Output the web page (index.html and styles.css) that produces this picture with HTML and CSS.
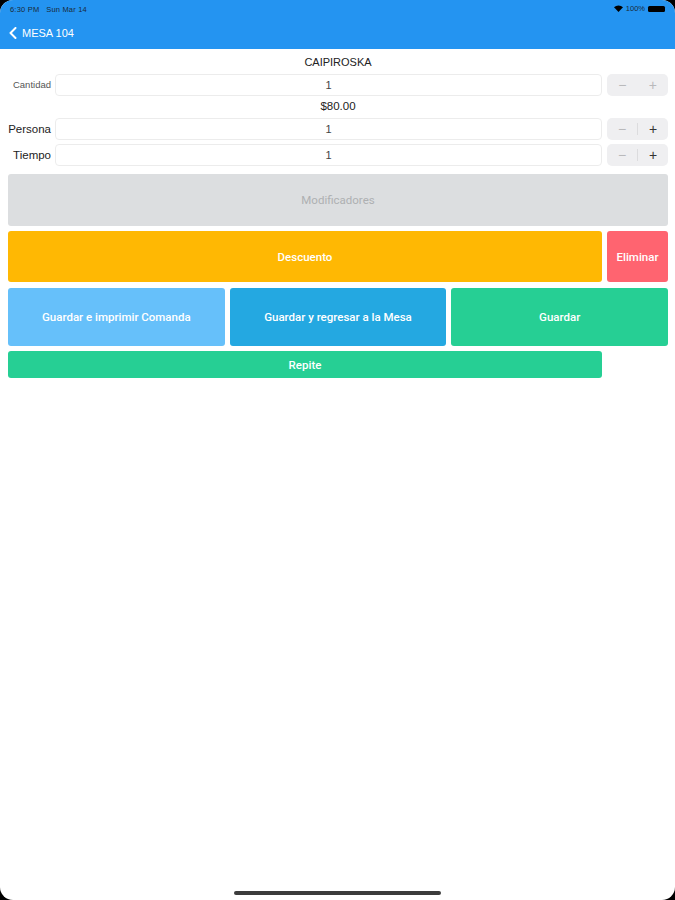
FILE: index.html
```html
<!DOCTYPE html>
<html lang="es">
<head>
<meta charset="utf-8">
<title>MESA 104</title>
<link rel="stylesheet" href="styles.css">
</head>
<body>
<div class="screen">
  <header class="topbar">
    <div class="status">
      <span class="time">6:30 PM&nbsp;&nbsp;&nbsp;Sun Mar 14</span>
      <span class="sys">
        <svg class="wifi" width="9" height="7" viewBox="0 0 9 7"><path d="M4.5 7 L0 2.2 A6.5 6.5 0 0 1 9 2.2 Z" fill="#000"/></svg>
        <span class="pct">100%</span>
        <span class="battery"></span>
      </span>
    </div>
    <div class="nav">
      <svg class="chev" width="8" height="12" viewBox="0 0 8 12"><path d="M6.5 1 L1.5 6 L6.5 11" fill="none" stroke="#fff" stroke-width="2" stroke-linecap="round" stroke-linejoin="round"/></svg>
      <span class="navtitle">MESA 104</span>
    </div>
  </header>

  <main class="content">
    <div class="title">CAIPIROSKA</div>
    <div class="row">
      <label class="lbl small">Cantidad</label>
      <div class="field">1</div>
      <div class="stepper disabled"><span class="minus">&minus;</span><span class="plus">+</span></div>
    </div>
    <div class="price">$80.00</div>
    <div class="row">
      <label class="lbl">Persona</label>
      <div class="field">1</div>
      <div class="stepper"><span class="minus">&minus;</span><span class="sep"></span><span class="plus">+</span></div>
    </div>
    <div class="row row-tight">
      <label class="lbl">Tiempo</label>
      <div class="field">1</div>
      <div class="stepper"><span class="minus">&minus;</span><span class="sep"></span><span class="plus">+</span></div>
    </div>

    <button class="btn mods">Modificadores</button>
    <div class="btnrow two">
      <button class="btn discount">Descuento</button>
      <button class="btn delete">Eliminar</button>
    </div>
    <div class="btnrow three">
      <button class="btn print">Guardar e imprimir Comanda</button>
      <button class="btn back">Guardar y regresar a la Mesa</button>
      <button class="btn save">Guardar</button>
    </div>
    <div class="btnrow two">
      <button class="btn repeat">Repite</button>
      <span></span>
    </div>
  </main>

  <div class="home"></div>
</div>
</body>
</html>
```

FILE: styles.css
```css
html { background: #000; }
body {
  margin: 0;
  font-family: "Liberation Sans", Arial, sans-serif;
  color: #222;
}
.screen {
  position: relative;
  width: 675px;
  height: 900px;
  background: #fff;
  border-radius: 13px;
  overflow: hidden;
}
.topbar {
  background: #2494f1;
  height: 49px;
  color: #fff;
}
.status {
  height: 17px;
  display: flex;
  justify-content: space-between;
  align-items: center;
  padding: 0 10px 0 10px;
  font-size: 7.5px;
  color: #1a2a3a;
}
.status .time { padding-top: 1px; letter-spacing: 0.2px; }
.sys { display: flex; align-items: center; gap: 3px; }
.pct { font-size: 7.5px; }
.battery {
  width: 17px;
  height: 6px;
  border-radius: 1.5px;
  background: #000;
  display: inline-block;
}
.nav {
  height: 32px;
  display: flex;
  align-items: center;
  padding-left: 9px;
  gap: 5px;
}
.chev { margin-top: -1px; }
.navtitle { font-size: 11px; color: #fff; }

.content {
  padding: 3px 7px 0 8px;
  display: flex;
  flex-direction: column;
}
.title, .price {
  height: 20px;
  line-height: 20px;
  text-align: center;
  font-size: 11px;
  color: #222;
}
.title { margin-bottom: 2px; }
.price { font-size: 11.5px; margin-bottom: 2px; }
.row {
  display: flex;
  height: 22px;
  align-items: stretch;
}
.row-tight { margin-top: 4px; }
.lbl {
  width: 43px;
  flex: none;
  text-align: right;
  font-size: 11.5px;
  line-height: 22px;
  color: #222;
  white-space: nowrap;
}
.lbl.small { font-size: 9.5px; color: #555; }
.field {
  flex: 1;
  margin-left: 4px;
  border: 1px solid #ececec;
  border-radius: 4px;
  text-align: center;
  font-size: 11px;
  line-height: 20px;
  color: #444;
}
.stepper {
  width: 61px;
  margin-left: 5px;
  flex: none;
  background: #efeff1;
  border-radius: 5px;
  display: flex;
  align-items: center;
  font-size: 14px;
  color: #333;
}
.stepper span.minus, .stepper span.plus {
  flex: 1;
  text-align: center;
  line-height: 22px;
}
.stepper .minus { color: #b9b9bb; }
.stepper.disabled .plus { color: #b9b9bb; }
.stepper .sep { width: 1px; height: 12px; background: #dcdcde; }

.btn {
  border: 0;
  border-radius: 3px;
  color: #fff;
  font-family: Roboto, "Liberation Sans", sans-serif;
  font-weight: 500;
  font-size: 11.5px;
  padding: 0;
  margin: 0;
}
.mods {
  margin-top: 8px;
  height: 52px;
  background: #dcdee0;
  color: #aeb0b2;
  font-weight: 400;
}
.btnrow { display: grid; gap: 5px; }
.btnrow.two { grid-template-columns: 1fr 61px; }
.btnrow.three { grid-template-columns: 1fr 1fr 1fr; }
.mods + .btnrow { margin-top: 5px; height: 51px; }
.btnrow.three { margin-top: 6px; height: 58px; }
.btnrow.three + .btnrow { margin-top: 5px; height: 27px; }
.discount { background: #ffb803; }
.delete { background: #ff6470; }
.print { background: #66c0fa; }
.back { background: #24a8e1; }
.save, .repeat { background: #26cf94; }

.home {
  position: absolute;
  left: 234px;
  bottom: 5px;
  width: 207px;
  height: 4px;
  border-radius: 2px;
  background: #3c3c3c;
}
```
